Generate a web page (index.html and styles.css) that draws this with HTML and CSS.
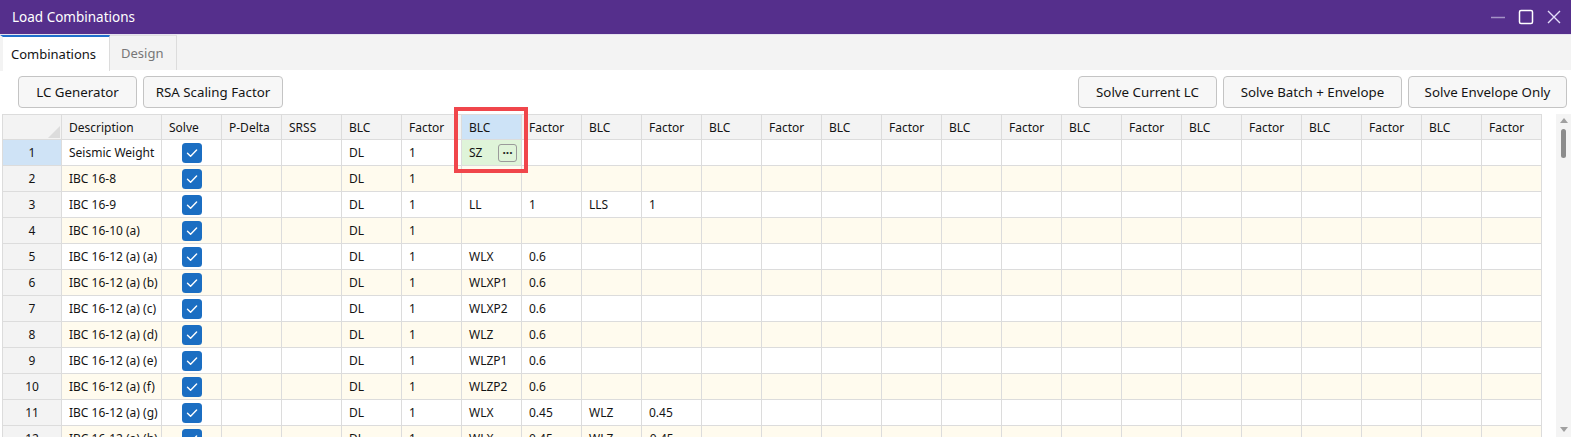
FILE: index.html
```html
<!DOCTYPE html>
<html>
<head>
<meta charset="utf-8">
<link rel="stylesheet" href="styles.css">
</head>
<body>
<div class="window">
  <div class="titlebar">
    <span class="title">Load Combinations</span>
    <div class="controls">
      <svg class="ctl-min" width="16" height="16" viewBox="0 0 16 16"><line x1="1" y1="8.5" x2="15" y2="8.5" stroke="#a493c6" stroke-width="1.5"/></svg>
      <svg class="ctl-max" width="16" height="16" viewBox="0 0 16 16"><rect x="1.5" y="1.5" width="13" height="13" rx="1.5" fill="none" stroke="#ffffff" stroke-width="1.5"/></svg>
      <svg class="ctl-close" width="16" height="16" viewBox="0 0 16 16"><path d="M2 2 L14 14 M14 2 L2 14" stroke="#e4defa" stroke-width="1.4"/></svg>
    </div>
  </div>
  <div class="tabs">
    <div class="tab active">Combinations</div>
    <div class="tab">Design</div>
  </div>
  <div class="toolbar">
    <div class="group">
      <button class="btn w119">LC Generator</button>
      <button class="btn w140">RSA Scaling Factor</button>
    </div>
    <div class="group">
      <button class="btn w139">Solve Current LC</button>
      <button class="btn w179">Solve Batch + Envelope</button>
      <button class="btn w159">Solve Envelope Only</button>
    </div>
  </div>
  <div class="gridarea">
    <div class="gridclip">
      <table class="grid">
        <colgroup>
          <col class="c-rh"><col class="c-desc">
          <col class="c-n"><col class="c-n"><col class="c-n">
          <col class="c-n"><col class="c-n"><col class="c-n"><col class="c-n"><col class="c-n"><col class="c-n"><col class="c-n"><col class="c-n"><col class="c-n"><col class="c-n">
          <col class="c-n"><col class="c-n"><col class="c-n"><col class="c-n"><col class="c-n"><col class="c-n"><col class="c-n"><col class="c-n"><col class="c-n"><col class="c-n">
        </colgroup>
        <thead>
          <tr>
            <th class="corner"><svg width="12" height="12" viewBox="0 0 12 12"><polygon points="12,0 12,12 0,12" fill="#dcdcdc"/></svg></th>
            <th>Description</th><th>Solve</th><th>P-Delta</th><th>SRSS</th>
            <th>BLC</th><th>Factor</th><th class="selcol">BLC</th><th>Factor</th>
            <th>BLC</th><th>Factor</th><th>BLC</th><th>Factor</th><th>BLC</th><th>Factor</th>
            <th>BLC</th><th>Factor</th><th>BLC</th><th>Factor</th><th>BLC</th><th>Factor</th>
            <th>BLC</th><th>Factor</th><th>BLC</th><th>Factor</th>
          </tr>
        </thead>
        <tbody id="rows"></tbody>
      </table>
    </div>
    <div class="scrollbar">
      <svg class="arrow" width="8" height="6" viewBox="0 0 8 6"><polygon points="4,0 8,5 0,5" fill="#a0a0a0"/></svg>
      <div class="thumb"></div>
      <div class="track"></div>
      <svg class="arrow" width="8" height="6" viewBox="0 0 8 6"><polygon points="0,0 8,0 4,5" fill="#a0a0a0"/></svg>
    </div>
  </div>
  <div class="highlight"></div>
</div>
<script>
  var data = [
    ["Seismic Weight","DL","1","SZ",""],
    ["IBC 16-8","DL","1","",""],
    ["IBC 16-9","DL","1","LL","1","LLS","1"],
    ["IBC 16-10 (a)","DL","1","",""],
    ["IBC 16-12 (a) (a)","DL","1","WLX","0.6"],
    ["IBC 16-12 (a) (b)","DL","1","WLXP1","0.6"],
    ["IBC 16-12 (a) (c)","DL","1","WLXP2","0.6"],
    ["IBC 16-12 (a) (d)","DL","1","WLZ","0.6"],
    ["IBC 16-12 (a) (e)","DL","1","WLZP1","0.6"],
    ["IBC 16-12 (a) (f)","DL","1","WLZP2","0.6"],
    ["IBC 16-12 (a) (g)","DL","1","WLX","0.45","WLZ","0.45"],
    ["IBC 16-12 (a) (h)","DL","1","WLX","0.45","WLZ","-0.45"]
  ];
  var check = '<svg width="20" height="20" viewBox="0 0 20 20"><rect x="0" y="0" width="20" height="20" rx="3.5" fill="#1b6ec2"/><path d="M5.5 10.2 L8.6 13.2 L14.6 7" fill="none" stroke="#ffffff" stroke-width="1.4" stroke-linecap="round" stroke-linejoin="round"/></svg>';
  var tb = document.getElementById("rows");
  var html = "";
  data.forEach(function (r, i) {
    html += '<tr class="' + (i % 2 ? "alt" : "") + '">';
    html += '<td class="rh' + (i === 0 ? " selrow" : "") + '">' + (i + 1) + '</td>';
    html += '<td>' + r[0] + '</td>';
    html += '<td class="chk">' + check + '</td><td></td><td></td>';
    for (var c = 1; c <= 20; c++) {
      var v = r[c] || "";
      if (i === 0 && c === 3) {
        html += '<td class="editcell"><div class="edit"><span>SZ</span><span class="dots">&middot;&middot;&middot;</span></div></td>';
      } else if (v.charAt(0) === "-") {
        html += '<td class="neg">' + v + '</td>';
      } else {
        html += '<td>' + v + '</td>';
      }
    }
    html += '</tr>';
  });
  tb.innerHTML = html;
</script>
</body>
</html>
```

FILE: styles.css
```css
* { box-sizing: border-box; }
html, body { margin: 0; padding: 0; background: #ffffff; }
body {
  font-family: "Noto Sans", "Open Sans", sans-serif;
  color: #141414;
  width: 1571px;
  height: 442px;
  overflow: hidden;
}
.window { position: relative; width: 1571px; height: 442px; background: #fff; }

.titlebar {
  height: 34px;
  background: #552f8c;
  display: flex;
  align-items: center;
  justify-content: space-between;
  padding: 0 9px 0 12px;
}
.title { color: #ffffff; font-size: 13.5px; letter-spacing: 0; }
.controls { display: flex; align-items: center; gap: 12px; }
.controls svg { display: block; }

.tabs {
  height: 36px;
  background: #f3f3f3;
  display: flex;
  align-items: stretch;
  border-top: 1px solid #e6e2ef;
}
.tab {
  font-size: 13px;
  color: #777;
  padding: 0 11px;
  display: flex;
  align-items: center;
  border-right: 1px solid #dcdcdc;
  border-top: 1px solid #e0e0e0;
  height: 35px;
}
.tab.active {
  width: 110px;
  background: #ffffff;
  color: #141414;
  border-top: 2px solid #1f6fcc;
  border-left: 3px solid #f3f3f3;
  padding-left: 8px;
  height: 36px;
  border-right: 1px solid #dcdcdc;
}
.tab:not(.active) { width: 67px; }

.toolbar {
  height: 44px;
  display: flex;
  justify-content: space-between;
  align-items: flex-start;
  padding: 6px 4px 0 18px;
}
.group { display: flex; gap: 6px; }
.btn {
  height: 32px;
  background: #f7f7f7;
  border: 1px solid #c4c4c4;
  border-radius: 4px;
  font-family: inherit;
  font-size: 13.3px;
  color: #141414;
  padding: 0;
}
.w119 { width: 119px; }
.w140 { width: 140px; }
.w139 { width: 139px; }
.w179 { width: 179px; }
.w159 { width: 159px; }

.gridarea {
  height: 323px;
  display: flex;
  padding-left: 2px;
}
.gridclip { width: 1540px; height: 323px; overflow: hidden; }
.grid {
  table-layout: fixed;
  border-collapse: separate;
  border-spacing: 0;
  width: 1540px;
  border-top: 1px solid #dcdcdc;
  border-left: 1px solid #dcdcdc;
  font-size: 12px;
}
.c-rh { width: 59px; }
.c-desc { width: 100px; }
.c-n { width: 60px; }
.grid th, .grid td {
  border-right: 1px solid #dcdcdc;
  border-bottom: 1px solid #dcdcdc;
  padding: 0 0 0 7px;
  text-align: left;
  white-space: nowrap;
  overflow: hidden;
  font-weight: normal;
}
.grid th {
  height: 25px;
  background: #f3f3f3;
  color: #141414;
}
.grid th.selcol { background: #cde3f7; }
.grid th.corner {
  text-align: right;
  vertical-align: bottom;
  padding: 0 1px 1px 0;
  line-height: 0;
}
.grid td { height: 26px; background: #ffffff; }
.grid tr.alt td { background: #fffbee; }
.grid td.rh {
  background: #f3f3f3;
  text-align: center;
  padding: 0;
}
.grid tr.alt td.rh { background: #f3f3f3; }
.grid td.rh.selrow { background: #cfe3f6; }
.grid td.chk { text-align: center; padding: 0; line-height: 0; }
.grid td.chk svg { display: inline-block; }
.grid td.neg { padding-left: 4px; }
.grid td.editcell { background: #dff4d9; padding: 0 4px 0 7px; }
.edit { display: flex; align-items: center; justify-content: space-between; }
.dots {
  width: 19px;
  height: 18px;
  border: 1px solid #9a9a9a;
  border-radius: 3px;
  display: flex;
  align-items: center;
  justify-content: center;
  font-size: 12px;
  letter-spacing: 0;
  line-height: 1;
  color: #222;
  font-weight: bold;
}

.scrollbar {
  margin-left: 14px;
  width: 15px;
  height: 323px;
  background: #f4f4f4;
  display: flex;
  flex-direction: column;
  align-items: center;
  padding: 4px 0 4px 0;
}
.scrollbar .arrow { display: block; }
.thumb {
  margin-top: 5px;
  width: 5px;
  height: 29px;
  border-radius: 3px;
  background: #8c8c8c;
}
.track { flex: 1; }

.highlight {
  position: absolute;
  left: 454px;
  top: 107px;
  width: 74px;
  height: 66px;
  border: 4px solid #f0464b;
}
```
